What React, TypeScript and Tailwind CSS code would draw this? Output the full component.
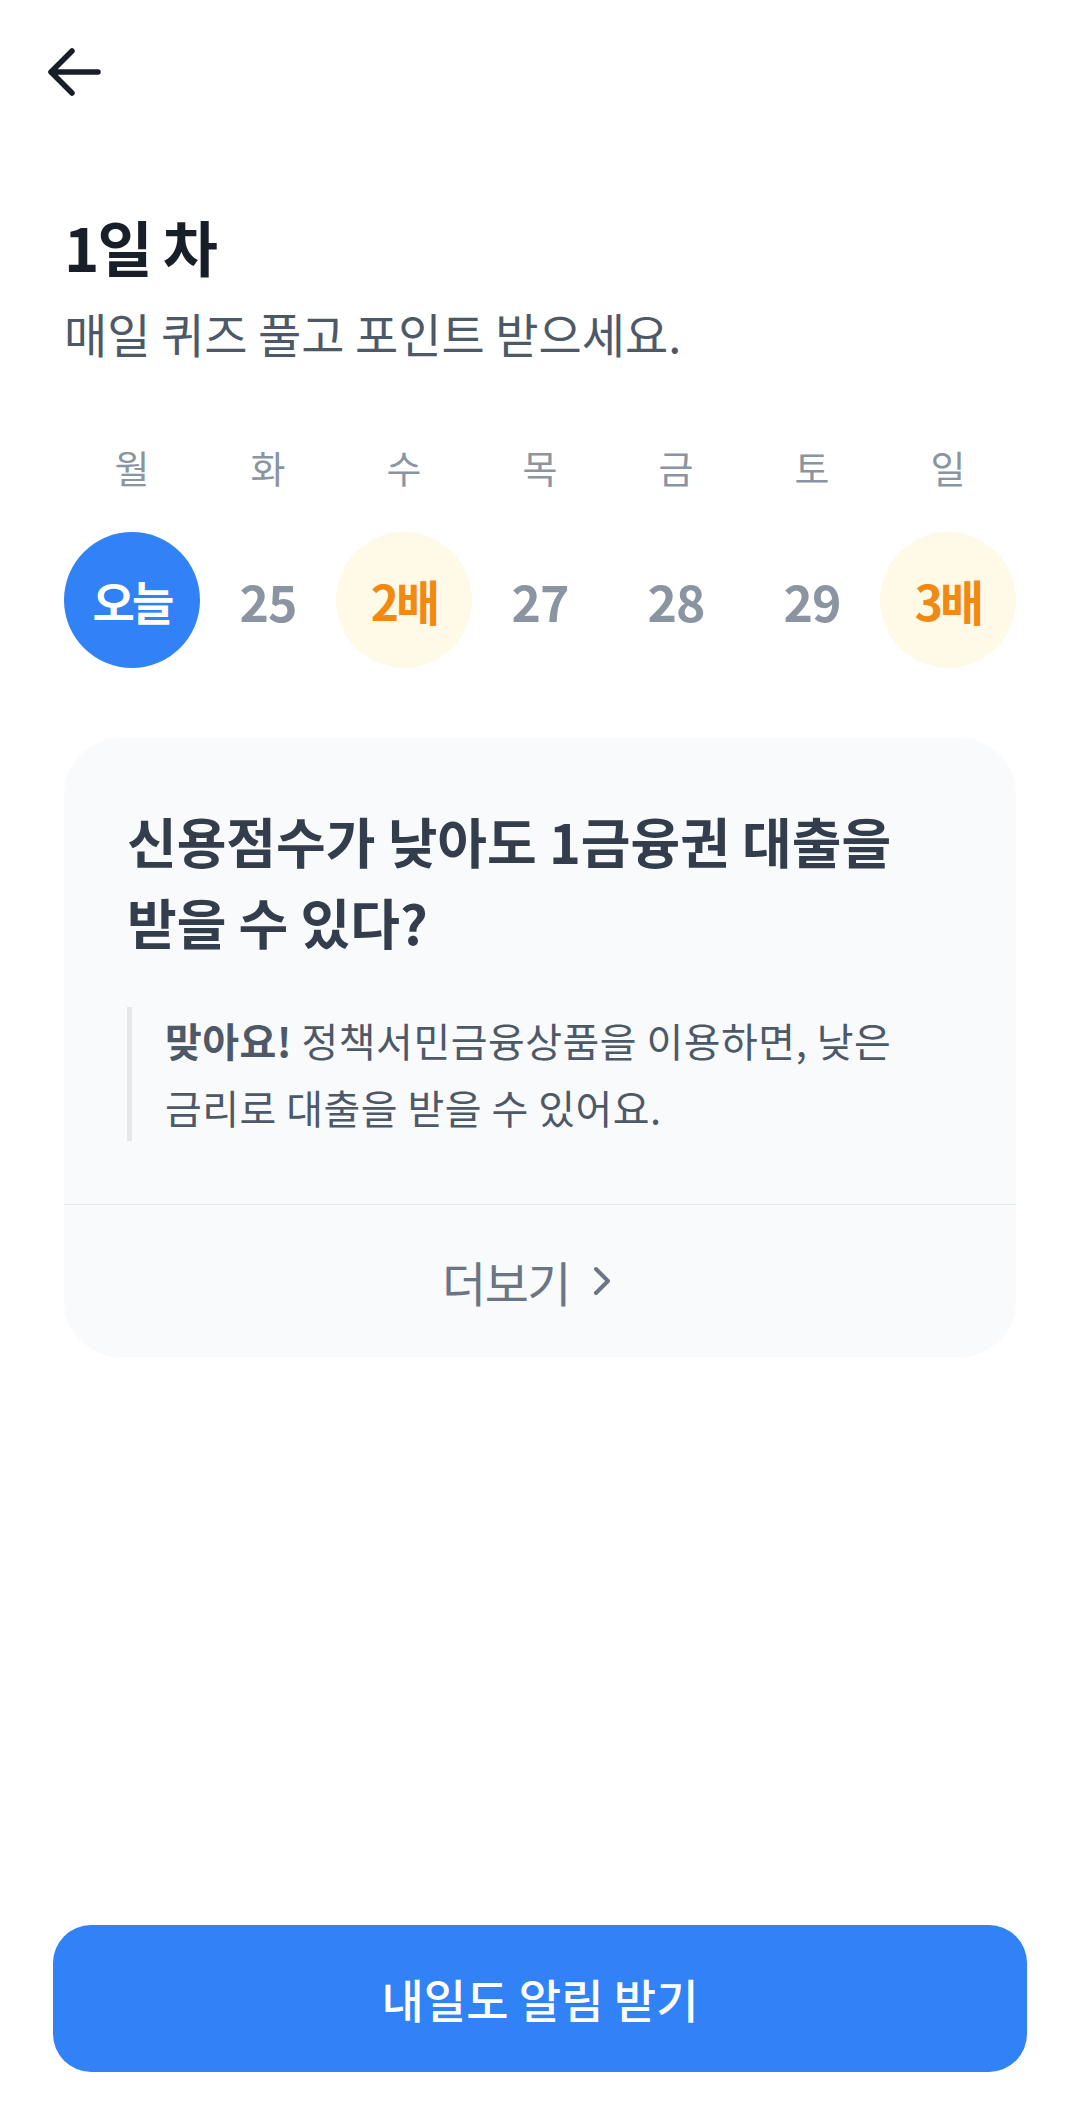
import React from "react";

const days = ["월", "화", "수", "목", "금", "토", "일"];

type Cell = { label: string; kind: "today" | "plain" | "bonus" };
const cells: Cell[] = [
  { label: "오늘", kind: "today" },
  { label: "25", kind: "plain" },
  { label: "2배", kind: "bonus" },
  { label: "27", kind: "plain" },
  { label: "28", kind: "plain" },
  { label: "29", kind: "plain" },
  { label: "3배", kind: "bonus" },
];

export default function App() {
  return (
    <div
      className="w-[1080px] h-[2124px] bg-white flex flex-col"
      style={{ fontFamily: '"Noto Sans CJK KR", "Noto Sans", sans-serif' }}
    >
      {/* header */}
      <div className="pt-[46px] pl-[47px] h-[208px]">
        <svg width="56" height="52" viewBox="0 0 56 52" fill="none">
          <path
            d="M4 26 H51 M25 5 L4 26 L25 47"
            stroke="#191F28"
            strokeWidth="5.5"
            strokeLinecap="round"
            strokeLinejoin="round"
          />
        </svg>
      </div>

      <div className="px-[64px]">
        <h1 className="text-[60px] leading-[75px] font-bold text-[#191F28] tracking-[-0.03em]">
          1일 차
        </h1>
        <p className="mt-[20px] text-[47px] leading-[60px] text-[#4E5968]">
          매일 퀴즈 풀고 포인트 받으세요.
        </p>

        <div className="mt-[79px] grid grid-cols-7">
          {days.map((d) => (
            <div
              key={d}
              className="text-center text-[38px] leading-[50px] text-[#8B95A1]"
            >
              {d}
            </div>
          ))}
        </div>

        <div className="mt-[40px] grid grid-cols-7">
          {cells.map((c, i) => (
            <div key={i} className="flex justify-center">
              {c.kind === "today" && (
                <div className="w-[136px] h-[136px] rounded-full bg-[#3182F6] flex items-center justify-center text-white font-bold text-[46px] tracking-[-0.06em]">
                  {c.label}
                </div>
              )}
              {c.kind === "plain" && (
                <div className="w-[136px] h-[136px] rounded-full flex items-center justify-center text-[#8B95A1] font-bold text-[50px] tracking-[-0.02em]">
                  {c.label}
                </div>
              )}
              {c.kind === "bonus" && (
                <div className="w-[136px] h-[136px] rounded-full bg-[#FFF9E7] flex items-center justify-center text-[#F18A12] font-bold text-[48px] tracking-[-0.06em]">
                  {c.label}
                </div>
              )}
            </div>
          ))}
        </div>

        {/* card */}
        <div className="mt-[70px] bg-[#F9FAFB] rounded-[56px] overflow-hidden">
          <div className="px-[63px] pt-[62px] pb-[63px]">
            <h2 className="text-[54px] leading-[81px] font-bold text-[#333D4B]">
              신용점수가 낮아도 1금융권 대출을
              <br />
              받을 수 있다?
            </h2>
            <div className="mt-[45px] border-l-[5px] border-[#E5E8EB] pl-[33px] text-[40px] leading-[67px] text-[#4E5968] tracking-[0.012em]">
              <span className="font-bold">맞아요!</span> 정책서민금융상품을 이용하면, 낮은
              <br />
              금리로 대출을 받을 수 있어요.
            </div>
          </div>
          <div className="h-[1px] bg-[#E5E8EB]" />
          <div className="h-[152px] flex items-center justify-center gap-[22px] pr-[24px] text-[#6B7684]">
            <span className="text-[48px] tracking-[-0.03em]">더보기</span>
            <svg width="22" height="32" viewBox="0 0 22 32" fill="none">
              <path
                d="M4 4 L16 16 L4 28"
                stroke="#6B7684"
                strokeWidth="4"
                strokeLinecap="round"
                strokeLinejoin="round"
              />
            </svg>
          </div>
        </div>
      </div>

      <div className="mt-auto px-[53px] pb-[52px]">
        <button className="w-full h-[147px] rounded-[38px] bg-[#3182F6] text-white text-[46px] font-medium flex items-center justify-center">
          내일도 알림 받기
        </button>
      </div>
    </div>
  );
}
